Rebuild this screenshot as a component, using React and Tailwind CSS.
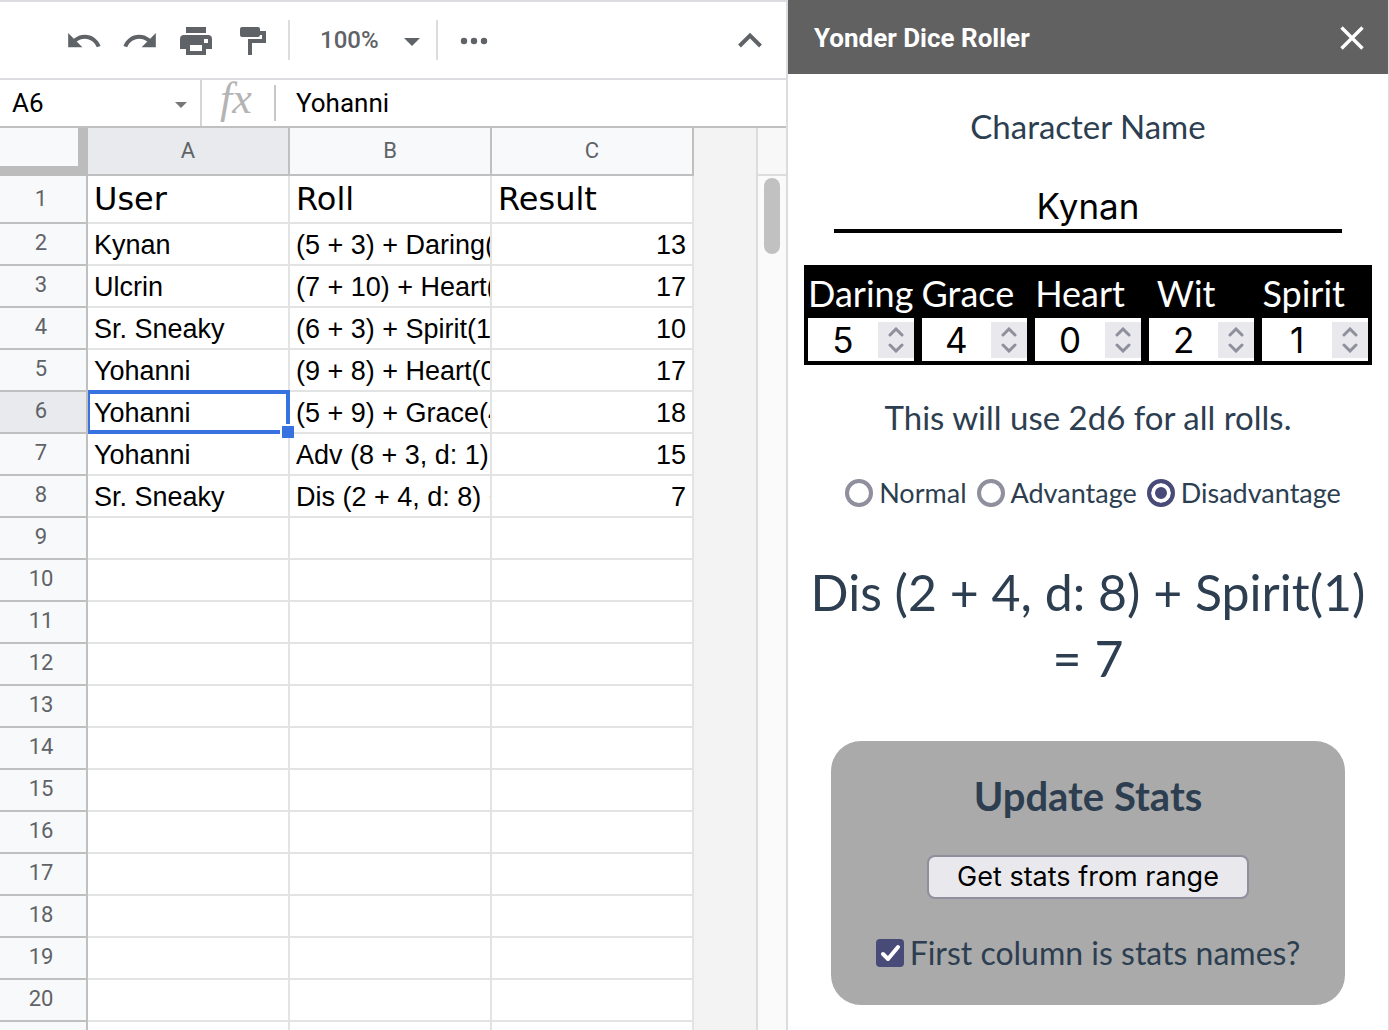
import React, { useState } from 'react';

const rows = [
  ['Kynan', '(5 + 3) + Daring(5) =', '13'],
  ['Ulcrin', '(7 + 10) + Heart(0) =', '17'],
  ['Sr. Sneaky', '(6 + 3) + Spirit(1) =', '10'],
  ['Yohanni', '(9 + 8) + Heart(0) =', '17'],
  ['Yohanni', '(5 + 9) + Grace(4) =', '18'],
  ['Yohanni', 'Adv (8 + 3, d: 1)', '15'],
  ['Sr. Sneaky', 'Dis (2 + 4, d: 8) + Spirit(1) =', '7'],
];

function IconButton({ label, className = '', children }) {
  return (
    <button type="button" aria-label={label} className={`flex shrink-0 items-center justify-center text-[#5f6368] ${className}`}>
      {children}
    </button>
  );
}

function Toolbar() {
  return (
    <div className="flex h-20 items-center border-y-2 border-[#dadce0] pr-6">
      <div className="flex flex-1 items-center pl-[65px]">
        <IconButton label="Undo" className="w-[38px] pt-0.5">
          <svg viewBox="0 0 24 24" className="size-[38px]" fill="currentColor">
            <path d="M12.5 8c-2.65 0-5.05.99-6.9 2.6L2 7v9h9l-3.62-3.62c1.39-1.16 3.16-1.88 5.12-1.88 3.54 0 6.55 2.31 7.6 5.5l2.37-.78C21.08 11.03 17.15 8 12.5 8z" />
          </svg>
        </IconButton>
        <IconButton label="Redo" className="ml-[18px] w-[38px] pt-0.5">
          <svg viewBox="0 0 24 24" className="size-[38px]" fill="currentColor">
            <path d="M18.4 10.6C16.55 8.99 14.15 8 11.5 8c-4.65 0-8.58 3.03-9.96 7.22L3.9 16c1.05-3.19 4.05-5.5 7.6-5.5 1.95 0 3.73.72 5.12 1.88L13 16h9V7l-3.6 3.6z" />
          </svg>
        </IconButton>
        <IconButton label="Print" className="ml-[21px] pt-0.5">
          <svg viewBox="0 0 32 28" className="h-7 w-8" fill="currentColor">
            <path d="M6 0h20v6H6z" />
            <path fillRule="evenodd" d="M4 8h24a4 4 0 0 1 4 4v10h-6v6H6v-6H0V12a4 4 0 0 1 4-4zm20 4v4h4v-4zM10 18v6h12v-6z" />
          </svg>
        </IconButton>
        <IconButton label="Paint format" className="ml-7 pt-0.5">
          <svg viewBox="0 0 26 28" className="h-7 w-[26px]" fill="currentColor">
            <rect width="20" height="10" rx="2" />
            <path d="M19 4h7v12H12v12H8V12h14V8h-3z" />
          </svg>
        </IconButton>
        <span className="ml-[22px] h-10 w-0.5 bg-[#dadce0]" />
        <button type="button" aria-label="Zoom" className="ml-[30px] flex items-center gap-[25px] font-['Roboto',sans-serif] text-2xl font-medium text-[#5f6368]">
          100%
          <svg viewBox="0 0 16 8" className="mt-1 h-2 w-4" fill="currentColor"><path d="M0 0h16L8 8z" /></svg>
        </button>
        <span className="ml-4 h-10 w-0.5 bg-[#dadce0]" />
        <IconButton label="More" className="ml-[22px] pt-0.5">
          <svg viewBox="0 0 28 8" className="h-2 w-7" fill="currentColor">
            <circle cx="4" cy="4" r="3.2" /><circle cx="14" cy="4" r="3.2" /><circle cx="24" cy="4" r="3.2" />
          </svg>
        </IconButton>
      </div>
      <IconButton label="Hide the menus">
        <svg viewBox="0 0 24 16" className="h-4 w-6" fill="none" stroke="currentColor" strokeWidth="4"><path d="M1.5 14L12 3.5 22.5 14" /></svg>
      </IconButton>
    </div>
  );
}

function FormulaBar() {
  return (
    <div className="flex h-12 items-center border-b-2 border-[#c0c0c0] font-['Roboto',sans-serif] text-[26px] text-black">
      <div className="flex w-[202px] items-center self-stretch border-r-2 border-[#d5d5d5] pr-[13px] pl-3">
        <input aria-label="Name box" defaultValue="A6" className="min-w-0 flex-1 outline-none" />
        <svg viewBox="0 0 12 6" className="mt-1 h-1.5 w-3" fill="#777"><path d="M0 0h12L6 6z" /></svg>
      </div>
      <span className="flex h-9 w-[74px] items-center justify-center border-r-2 border-[#c8c8c8] pr-1 pb-2 font-['Liberation_Serif',serif] text-[44px] text-[#b4b4b4] italic">fx</span>
      <input aria-label="Formula" defaultValue="Yohanni" className="min-w-0 flex-1 pl-5 outline-none" />
    </div>
  );
}

const headCell = "border-r-2 border-b-2 border-[#c0c0c0] font-['Roboto',sans-serif] text-[22px] font-normal text-[#5f6368]";
const cell = 'overflow-hidden border-r-2 border-b-2 border-[#e2e3e3] whitespace-nowrap';

function Grid() {
  return (
    <div className="flex min-h-0 flex-1">
      <div className="min-w-0 flex-1 overflow-hidden bg-[#f3f3f3]">
        <table className="w-[694px] table-fixed border-separate border-spacing-0 bg-white font-['Liberation_Sans',Arial,sans-serif] text-[27px] leading-8 text-black">
          <colgroup>
            <col className="w-[88px]" />
            <col />
            <col />
            <col />
          </colgroup>
          <thead>
            <tr className="h-12">
              <th aria-label="Select all" className="border-r-10 border-b-10 border-[#bcbcbc] bg-[#f8f9fa] p-0" />
              <th className={`${headCell} bg-[#e8eaed]`}>A</th>
              <th className={`${headCell} bg-[#f8f9fa]`}>B</th>
              <th className={`${headCell} bg-[#f8f9fa]`}>C</th>
            </tr>
          </thead>
          <tbody>
            <tr className="h-12 font-['DejaVu_Sans',Verdana,sans-serif] text-[32px]">
              <th className={`${headCell} bg-[#f8f9fa] pr-1`}>1</th>
              <td className={`${cell} pl-1.5`}>User</td>
              <td className={`${cell} pl-1.5`}>Roll</td>
              <td className={`${cell} pl-1.5`}>Result</td>
            </tr>
            {Array.from({ length: 21 }, (_, i) => {
              const [user = '', roll = '', result = ''] = rows[i] || [];
              const active = i === 4;
              return (
                <tr key={i} className="h-[42px]">
                  <th className={`${headCell} pr-1 pb-0.5 ${active ? 'bg-[#e8eaed]' : 'bg-[#f8f9fa]'}`}>{i + 2}</th>
                  <td className={active ? 'relative border-r-2 border-b-2 border-[#e2e3e3] pt-0.5 pl-1.5' : `${cell} pt-0.5 pl-1.5`}>
                    {user}
                    {active && (
                      <span className="absolute -top-0.5 -right-0.5 -bottom-0.5 left-0 border-4 border-l-2 border-[#3871e0]">
                        <span className="absolute -right-2 -bottom-2 size-3.5 border-t-2 border-l-2 border-white bg-[#3871e0]" />
                      </span>
                    )}
                  </td>
                  <td className={`${cell} pt-0.5 pl-1.5`}>{roll}</td>
                  <td className={`${cell} pt-0.5 pr-1.5 text-right`}>{result}</td>
                </tr>
              );
            })}
          </tbody>
        </table>
      </div>
      <div className="flex w-[30px] flex-col border-l-2 border-[#dcdcdc] bg-[#fafafa]">
        <div className="h-12 shrink-0 border-b-2 border-[#dcdcdc] bg-[#f8f8f8]" />
        <div className="mx-1.5 mt-0.5 h-[76px] w-4 rounded-full bg-[#c1c1c1]" />
      </div>
    </div>
  );
}

function Stat({ name, value, headClass = '' }) {
  const [n, setN] = useState(value);
  return (
    <div className="min-w-0 flex-1 px-1">
      <label htmlFor={name} className={`block h-[49px] text-[36px] leading-[48px] whitespace-nowrap text-white ${headClass}`}>{name}</label>
      <div className="flex h-[43px] items-center bg-white">
        <input
          id={name}
          type="number"
          value={n}
          onChange={(e) => setN(Number(e.target.value))}
          className="w-full min-w-0 flex-1 appearance-none text-center font-['Inter',sans-serif] text-[35px] leading-10 text-black outline-none [-moz-appearance:textfield] [&::-webkit-inner-spin-button]:appearance-none"
        />
        <div className="flex h-9 w-9 shrink-0 flex-col bg-[#e9e9ed] text-[#8f8f9d]">
          <button type="button" aria-label={`Increase ${name}`} onClick={() => setN(n + 1)} className="flex flex-1 items-center justify-center pt-0.5">
            <svg viewBox="0 0 16 10" className="h-2.5 w-4" fill="none" stroke="currentColor" strokeWidth="3" strokeLinecap="round"><path d="M2 8l6-6 6 6" /></svg>
          </button>
          <button type="button" aria-label={`Decrease ${name}`} onClick={() => setN(n - 1)} className="flex flex-1 items-center justify-center pb-0.5">
            <svg viewBox="0 0 16 10" className="h-2.5 w-4" fill="none" stroke="currentColor" strokeWidth="3" strokeLinecap="round"><path d="M2 2l6 6 6-6" /></svg>
          </button>
        </div>
      </div>
    </div>
  );
}

function Sidebar() {
  return (
    <aside className="flex w-[603px] shrink-0 flex-col border-r border-l-2 border-[#dadce0] bg-white font-['Lato',sans-serif] text-[#2c3e50]">
      <header className="flex h-[74px] shrink-0 items-center justify-between bg-[#616161] pt-0.5 pr-6 pl-[26px] text-white">
        <h1 className="font-['Roboto',sans-serif] text-[26px] font-bold">Yonder Dice Roller</h1>
        <button type="button" aria-label="Close">
          <svg viewBox="0 0 24 24" className="size-6" fill="none" stroke="currentColor" strokeWidth="3.4"><path d="M1.5 1.5l21 21M22.5 1.5l-21 21" /></svg>
        </button>
      </header>
      <div className="flex flex-col px-4 text-center text-[33px]">
        <label htmlFor="character" className="mt-[30px] leading-11">Character Name</label>
        <input id="character" defaultValue="Kynan" className="mx-[30px] mt-[34px] h-[51px] border-b-4 border-black text-center font-['Inter',sans-serif] text-[35px] leading-11 text-black outline-none" />
        <div className="mt-8 flex bg-black py-1 text-left">
          <Stat name="Daring" value={5} />
          <Stat name="Grace" value={4} />
          <Stat name="Heart" value={0} />
          <Stat name="Wit" value={2} headClass="pl-2" />
          <Stat name="Spirit" value={1} />
        </div>
        <p className="mt-[30px] leading-11">This will use 2d6 for all rolls.</p>
        <div className="mt-[34px] flex items-center justify-center gap-2.5 pr-2 pl-[18px] text-[27px] leading-10">
          {['Normal', 'Advantage', 'Disadvantage'].map((m) => (
            <label key={m} className="flex items-center gap-1.5">
              <input
                type="radio"
                name="mode"
                defaultChecked={m === 'Disadvantage'}
                className="size-7 appearance-none rounded-full border-4 border-[#8f8f9d] bg-white checked:border-[#484b78] checked:bg-[#484b78] checked:shadow-[inset_0_0_0_4px_white]"
              />
              {m}
            </label>
          ))}
        </div>
        <output className="mt-[46px] block text-[50px] leading-[66px]">
          Dis (2 + 4, d: 8) + Spirit(1) = 7
        </output>
        <section className="mx-[27px] mt-[50px] flex flex-col items-center rounded-[30px] bg-[#aaaaaa] pt-7 pb-[30px]">
          <h2 className="text-[40px] leading-[54px] font-bold">Update Stats</h2>
          <button type="button" className="mt-8 h-11 rounded-lg border-2 border-[#8f8f9d] bg-[#e9e9ed] px-7 font-['Inter',sans-serif] text-[27px] text-black">Get stats from range</button>
          <label className="mt-8 flex items-center gap-1.5 text-[32px] leading-11">
            <span className="grid">
              <input type="checkbox" defaultChecked className="col-start-1 row-start-1 size-7 appearance-none rounded bg-[#484b78]" />
              <svg viewBox="0 0 28 28" className="pointer-events-none col-start-1 row-start-1 size-7" fill="none" stroke="white" strokeWidth="4" strokeLinecap="round" strokeLinejoin="round"><path d="M7 15l5 5L22 8" /></svg>
            </span>
            First column is stats names?
          </label>
        </section>
      </div>
    </aside>
  );
}

export default function App() {
  return (
    <div className="flex h-screen overflow-hidden bg-white">
      <main className="flex min-w-0 flex-1 flex-col">
        <Toolbar />
        <FormulaBar />
        <Grid />
      </main>
      <Sidebar />
    </div>
  );
}
